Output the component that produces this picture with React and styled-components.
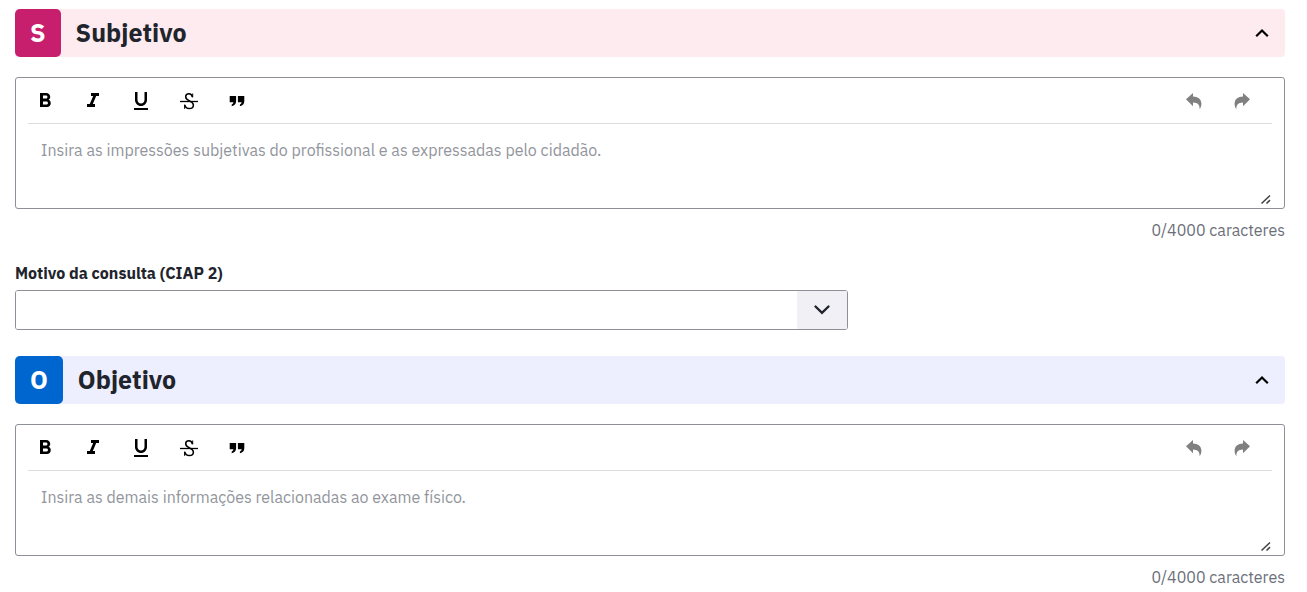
import React, { useId, useState } from 'react';
import styled, { createGlobalStyle, css } from 'styled-components';
import {
  MdFormatBold,
  MdFormatItalic,
  MdFormatUnderlined,
} from 'react-icons/md';

const GlobalStyle = createGlobalStyle`
  * {
    box-sizing: border-box;
  }
  body {
    margin: 0;
    background: #fff;
    color: #21242c;
    font-family: 'IBM Plex Sans', 'Noto Sans', sans-serif;
    font-size: 16px;
    line-height: 24px;
  }
`;

const Page = styled.main`
  padding: 9px 22px 0 15px;
`;

const Section = styled.section`
  margin-bottom: 26px;
`;

const Header = styled.header`
  display: flex;
  align-items: center;
  height: 48px;
  margin-bottom: 20px;
  padding-right: 11px;
  border-radius: 4px;
  background: ${(props) => props.$background};
`;

const Badge = styled.span`
  display: flex;
  align-items: center;
  justify-content: center;
  height: 100%;
  margin-right: 15px;
  padding: 0 15px;
  border-radius: 5px;
  background: ${(props) => props.$color};
  color: #fff;
  font-size: 25px;
  font-weight: 700;
`;

const Title = styled.h2`
  flex: 1;
  margin: 0;
  font-size: 25px;
  font-weight: 700;
  line-height: 32px;
`;

const IconButton = styled.button`
  display: flex;
  align-items: center;
  justify-content: center;
  width: 24px;
  height: 24px;
  padding: 0;
  border: 0;
  background: none;
  color: #000;
  cursor: pointer;

  ${(props) =>
    props.disabled &&
    css`
      color: #808080;
      cursor: default;
    `}
`;

const EditorBox = styled.div`
  position: relative;
  padding: 0 12px;
  border: 1px solid #8d8f99;
  border-radius: 3px;
`;

const Toolbar = styled.div`
  display: flex;
  align-items: center;
  gap: 24px;
  height: 46px;
  padding: 1px 18px 0 5px;
  border-bottom: 1px solid #dcdde1;
`;

const Spacer = styled.span`
  flex: 1;
`;

const TextArea = styled.textarea`
  display: block;
  width: 100%;
  height: 84px;
  padding: 14px 13px;
  border: 0;
  outline: 0;
  resize: none;
  background: none;
  color: inherit;
  font: inherit;

  &::placeholder {
    color: #92959c;
    opacity: 1;
  }
`;

const Grip = styled.svg`
  position: absolute;
  right: 12px;
  bottom: 3px;
`;

const Counter = styled.p`
  margin: 9px 0 0;
  color: #6c6f79;
  text-align: right;
`;

const Fields = styled.div`
  display: grid;
  grid-template-columns: 2fr 1fr;
  column-gap: 20px;
  margin-top: 19px;
`;

const Label = styled.label`
  display: block;
  margin-bottom: 5px;
  font-size: 16px;
  font-weight: 700;
`;

const SelectBox = styled.div`
  display: grid;
  grid-template-columns: 1fr 50px;
  height: 40px;
  overflow: hidden;
  border: 1px solid #8d8f99;
  border-radius: 3px;
`;

const Select = styled.select`
  grid-area: 1 / 1 / 2 / 3;
  padding: 0 62px 0 12px;
  border: 0;
  appearance: none;
  background: #fff;
  color: inherit;
  font: inherit;
`;

const SelectArrow = styled.span`
  grid-area: 1 / 2;
  display: flex;
  align-items: center;
  justify-content: center;
  background: #f0f0f5;
  pointer-events: none;
`;

const ChevronUp = ({ open }) => (
  <svg width="20" height="20" viewBox="0 0 20 20" fill="none">
    <path
      d={open ? 'M4.2 13.3 10 7.5 15.8 13.3' : 'M4.2 7.5 10 13.3 15.8 7.5'}
      stroke="#000"
      strokeWidth="2.2"
    />
  </svg>
);

const ChevronDown = () => (
  <svg width="20" height="20" viewBox="0 0 20 20" fill="none">
    <path
      d="M3.5 6.5 10 12.8 16.5 6.5"
      stroke="#21242c"
      strokeWidth="2.4"
      strokeLinecap="round"
    />
  </svg>
);

const StrikeIcon = () => (
  <svg width="20" height="20" viewBox="0 0 20 20" fill="none" stroke="#000">
    <path d="M1 10.5h18" strokeWidth="1.3" />
    <path
      d="M13.4 6.2C13 4 11.900 2.700 10 2.700 8 2.700 6.700 3.900 6.700 5.700c0 2.200 1.600 3.200 3.800 4.200 2.400 1.100 3.900 2.100 3.900 4.100 0 2.200-1.600 3.600-4.100 3.600-2.400 0-4-1.300-4.500-3.700"
      strokeWidth="1.500"
    />
    <path d="M13.700 2.500v3.900M5.600 13.600v4.200" strokeWidth="1" />
  </svg>
);

const QuoteIcon = () => (
  <svg width="20" height="20" viewBox="0 0 20 20" fill="currentColor">
    <path d="M2.700 5h6.400v5.300c0 2.600-1.500 4.500-4.400 4.900v-1.700c1.200-.5 1.700-1.200 1.700-2.200H2.700zM10.900 5h6.400v5.300c0 2.600-1.500 4.500-4.400 4.900v-1.700c1.200-.5 1.700-1.200 1.700-2.200h-3.700z" />
  </svg>
);

const UndoIcon = ({ flip }) => (
  <svg width="20" height="20" viewBox="0 0 20 20" fill="currentColor">
    <path
      transform={flip ? 'matrix(-1 0 0 1 20 0)' : undefined}
      d="M2 8.300 9 2v3.600c5.200.2 8.400 2.800 8.400 7.200 0 2-.6 3.900-1.800 5.400.3-4.200-1.800-6.600-6.600-6.700v3.700z"
    />
  </svg>
);

const Editor = ({ label, placeholder }) => {
  const [text, setText] = useState('');

  return (
    <>
      <EditorBox>
        <Toolbar>
          <IconButton type="button" aria-label="Negrito">
            <MdFormatBold size={24} />
          </IconButton>
          <IconButton type="button" aria-label="Itálico">
            <MdFormatItalic size={24} />
          </IconButton>
          <IconButton type="button" aria-label="Sublinhado">
            <MdFormatUnderlined size={24} />
          </IconButton>
          <IconButton type="button" aria-label="Tachado">
            <StrikeIcon />
          </IconButton>
          <IconButton type="button" aria-label="Citação">
            <QuoteIcon />
          </IconButton>
          <Spacer />
          <IconButton type="button" aria-label="Desfazer" disabled>
            <UndoIcon />
          </IconButton>
          <IconButton type="button" aria-label="Refazer" disabled>
            <UndoIcon flip />
          </IconButton>
        </Toolbar>
        <TextArea
          aria-label={label}
          placeholder={placeholder}
          maxLength={4000}
          value={text}
          onChange={(e) => setText(e.target.value)}
        />
        <Grip width="12" height="12" viewBox="0 0 12 12" aria-hidden="true">
          <path
            d="M1.500 10.500 10 2.500M6.500 10.500 10 7.200"
            stroke="#444"
            strokeWidth="1.600"
          />
        </Grip>
      </EditorBox>
      <Counter>{text.length}/4000 caracteres</Counter>
    </>
  );
};

const SoapSection = ({ title, color, background, placeholder, children }) => {
  const [open, setOpen] = useState(true);

  return (
    <Section>
      <Header $background={background}>
        <Badge $color={color}>{title[0]}</Badge>
        <Title>{title}</Title>
        <IconButton
          type="button"
          aria-label={title}
          aria-expanded={open}
          onClick={() => setOpen(!open)}
        >
          <ChevronUp open={open} />
        </IconButton>
      </Header>
      {open && (
        <>
          <Editor label={title} placeholder={placeholder} />
          {children}
        </>
      )}
    </Section>
  );
};

const App = () => {
  const reasonId = useId();

  return (
    <Page>
      <GlobalStyle />
      <SoapSection
        title="Subjetivo"
        color="#c71f6e"
        background="#feebf0"
        placeholder="Insira as impressões subjetivas do profissional e as expressadas pelo cidadão."
      >
        <Fields>
          <div>
            <Label htmlFor={reasonId}>Motivo da consulta (CIAP 2)</Label>
            <SelectBox>
              <Select id={reasonId} defaultValue="">
                <option value="" />
              </Select>
              <SelectArrow>
                <ChevronDown />
              </SelectArrow>
            </SelectBox>
          </div>
        </Fields>
      </SoapSection>
      <SoapSection
        title="Objetivo"
        color="#0066cf"
        background="#edeefe"
        placeholder="Insira as demais informações relacionadas ao exame físico."
      />
    </Page>
  );
};

export default App;
